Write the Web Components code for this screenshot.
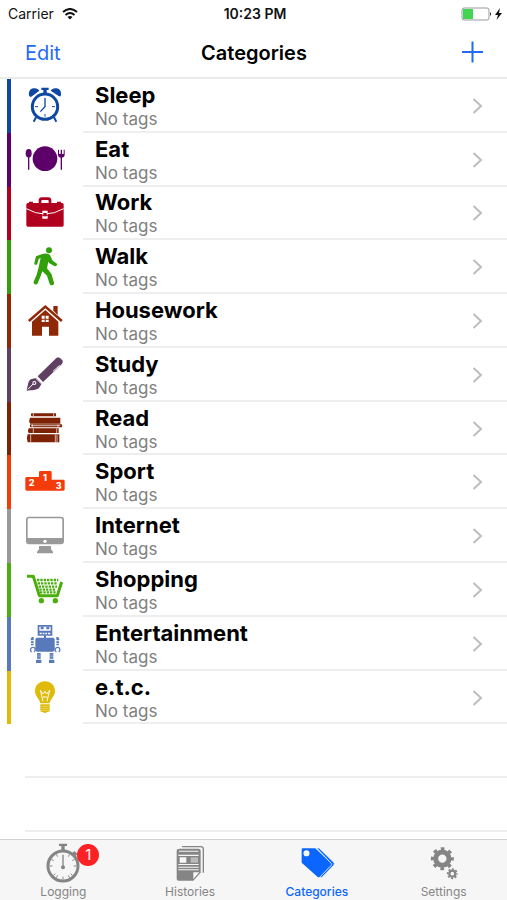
<!DOCTYPE html>
<html lang="en">
<head>
<meta charset="utf-8">
<meta name="viewport" content="width=device-width, initial-scale=1">
<title>Categories</title>
<style>
  body { margin: 0; background: #fff; color: #000; font-family: Inter, "Liberation Sans", sans-serif; }
</style>
</head>
<body>
<category-app></category-app>

<script>
const ICONS = {
  sleep: `<g fill="none" stroke="currentColor">
      <circle cx="60" cy="62" r="38" stroke-width="9"/>
      <path d="M60 36V62L46 77" stroke-width="4"/>
      <path d="M30 62h9M81 62h9M60 84v8" stroke-width="3"/>
      <path d="M33 94l-7 13M87 94l7 13" stroke-width="6"/></g>
    <path d="M13 31C9 18 15 8 26 7c8-1 14 2 17 7L18 33zM107 31c4-13-2-23-13-24-8-1-14 2-17 7l25 17zM49 5h22v7h-6v10H55V12h-6z"/>`,
  eat: `<circle cx="60" cy="56" r="37"/>
    <ellipse cx="11" cy="40" rx="9" ry="13"/><path d="M9 50h4v39H9zM107 50h4v39h-4z"/>
    <path d="M99 29h3v13h5V29h4v13h5V29h3v15c0 6-4 9-10 9s-10-3-10-9z"/>`,
  work: `<path d="M41 30V22c0-6 4-9 9-9h20c5 0 9 3 9 9v8h-8v-6c0-2-1-3-3-3H52c-2 0-3 1-3 3v6z"/>
    <path d="M11 30h98c5 0 7 2 7 6v59c0 4-2 6-6 6H10c-4 0-6-2-6-6V36c0-4 2-6 7-6zM12 26h12v5H12zM96 26h12v5H96z"/>
    <path d="M4 47q56 32 112 0" fill="none" stroke="#fff" stroke-width="3"/>
    <path d="M52 53h16v12H52zM52 68h16v9H52z" fill="#fff"/><path d="M55 60h10v10H55z"/>`,
  walk: `<ellipse cx="72" cy="10" rx="9" ry="9"/>
    <path d="M50 22c9-4 22-4 26 4l7 15 11 8c5 3 1 11-6 8L73 49l-3-5-4 20 13 16 8 27c2 8-10 11-13 4l-8-25-14-13-5 14-9 22c-4 7-14 3-12-5l9-21 6-22 6-29-6 4-4 14c-2 6-11 4-9-2l5-20z"/>`,
  house: `<path d="M85 15h13v27L85 29z"/><path d="M61 12L113 57l-5 6-47-41L14 63l-5-6z"/>
    <path d="M61 27l39 35v42H72V77H51v27H21V62z"/>
    <path d="M50 44h9v9h-9zM62 44h9v9h-9zM50 56h9v7h-9zM62 56h9v7h-9z" fill="#fff"/>`,
  study: `<path d="M38 64L91 12c5-5 9-5 14-3l7 7c3 5 1 9-4 14L54 81z"/>
    <path d="M33 69l17 17-8 13c-8 7-22 6-37 8 4-15 3-27 12-34z"/>
    <path d="M32 70l19 19" stroke="#fff" stroke-width="2"/>
    <path d="M9 103l18-19" stroke="#fff" stroke-width="3"/><circle cx="28" cy="84" r="6" fill="#fff"/><circle cx="28" cy="84" r="3"/>
    <path d="M104 31L84 49" stroke="#fff" stroke-width="3"/>`,
  read: `<path d="M19 13h74v9H19q-3-4 0-9zM15 26h91v18H15q-5-9 0-18zM16 46h94q4 4 0 9H16q-3-4 0-9zM11 58h90v14H11q-4-7 0-14zM8 76h95v24H8q-5-12 0-24z"/>
    <path d="M25 13v9M86 13v9M25 58v14M95 58v14M17 76v24M91 76v24M96 76v24" stroke="#fff" stroke-width="2"/>
    <path d="M22 46v9M99 46v9M18 50h88" stroke="#fff" stroke-width="2"/>`,
  sport: `<path d="M1 49q0-4 4-4h37V31q0-4 4-4h30q4 0 4 4v22h35q4 0 4 4v25q0 4-4 4H5q-4 0-4-4z"/>
    <g fill="#fff" font-family="Inter, sans-serif" font-weight="800" font-size="27" text-anchor="middle"><text x="20" y="73">2</text><text x="60" y="57">1</text><text x="101" y="80">3</text></g>`,
  internet: `<path fill-rule="evenodd" d="M12 2h96q9 0 9 9v65q0 9-9 9H12q-9 0-9-9V11q0-9 9-9zM12 7q-4 0-4 4v55h104V11q0-4-4-4z"/>
    <path d="M42 90h36v10l6 7v5H36v-5l6-7z"/><circle cx="60" cy="76" r="5" fill="#fff"/>`,
  shopping: `<g fill="none" stroke="currentColor" stroke-linejoin="round"><path d="M6 19h19l18 58h54l13-41" stroke-width="9"/>
    <path d="M36 30h64M38 40h60M41 50h55M43 59h50M45 67h48" stroke-width="7" stroke-dasharray="7 3"/></g>
    <circle cx="49" cy="92" r="8"/><circle cx="91" cy="92" r="8"/>`,
  entertainment: `<path d="M38 3h44v32H38zM57 35h6v6h-6zM35 41h50l4 4v33l-4 5H35l-4-5V45z"/>
    <path d="M43 8h34v12H43zM44 26h32v5H44z" fill="#fff"/>
    <path d="M47 9h9v7h-9zM64 9h9v7h-9zM50 25h3v7h-3zM58 25h3v7h-3zM66 25h3v7h-3zM26 39h-5q-5 4-4 10h9zM94 39h5q5 4 4 10h-9zM18 52h8v5h-8zM94 52h8v5h-8zM18 59h8v5h-8zM94 59h8v5h-8zM36 87h11v17H36zM74 87h11v17H74zM33 110q0-3 4-3h12v10H33zM72 107h12q4 0 4 3v7H72z"/>
    <path d="M20 84c-7-5-3-14 4-14s9 10 3 14M94 84c-7-5-3-14 4-14s9 10 3 14" fill="none" stroke="currentColor" stroke-width="4"/>
    <path d="M36 93h11M36 98h11M74 93h11M74 98h11" stroke="#fff" stroke-width="1"/>`,
  etc: `<path d="M60 10c18 0 30 13 30 30 0 14-14 24-16 36H46C44 64 30 54 30 40c0-17 12-30 30-30zM46 79h28v18q0 5-5 5h-3q-6 7-12 0h-3q-5 0-5-5z"/>
    <path d="M46 36l8 34M74 36l-8 34M48 40l7 8 5-8 5 8 7-8M54 57h12" fill="none" stroke="#fff" stroke-width="3"/>
    <path d="M48 85h24M48 91h24M48 97h24" stroke="#fff" stroke-width="1"/>`,
  logging: `<g fill="none" stroke="currentColor"><circle cx="60" cy="69" r="45" stroke-width="9"/>
      <path d="M60 35v38" stroke-width="4"/>
      <path d="M60 101v8M28 69h-8M92 69h8M37 92l-6 6M83 92l6 6M44 41l-4-7M76 41l4-7M44 97l-4 7M76 97l4 7M32 53l-7-4M88 53l7-4" stroke-width="3"/>
      <path d="M91 27l10 9" stroke-width="9"/></g>
    <circle cx="60" cy="73" r="6"/><path d="M48 2h24v7h-7v14H55V9h-7z"/>`,
  histories: `<path d="M36 11h56q8 0 8 8v70" fill="none" stroke="currentColor" stroke-width="4"/>
    <path d="M29 17h56q7 0 7 7v65L70 113H26q-6 0-6-6V24q0-7 9-7z"/>
    <path d="M27 23h58v3H27zM25 35h61v4H25zM29 43h20v16H29zM25 63h61v3H25zM25 71h61v3H25zM25 79h61v3H25zM70 88h18l-18 20z" fill="#f6f6f6"/>
    <path d="M62 43h22v16H62z" fill="#bbb"/>`,
  categories: `<path fill-rule="evenodd" d="M17 16h38l50 48-37 38q-3 2-6 0L14 59V20q0-4 3-4zM28 22a9 9 0 1 0 1 18 9 9 0 0 0-1-18z"/>
    <path d="M59 15h7l44 43q4 5 0 9L75 103h-7l35-36q2-3 0-6z" stroke="#f6f6f6" stroke-width="2"/>`,
  settings: `<g fill="none" stroke="currentColor"><circle cx="55" cy="47" r="20" stroke-width="15"/>
      <circle cx="55" cy="47" r="30" stroke-width="9" stroke-dasharray="11 12.56" stroke-dashoffset="5.5"/>
      <circle cx="85" cy="92" r="9" stroke-width="7"/><circle cx="85" cy="92" r="14" stroke-width="5" stroke-dasharray="6 5" stroke-dashoffset="3"/></g>`
};

class AppIcon extends HTMLElement {
  static observedAttributes = ['name'];
  constructor() {
    super();
    this.attachShadow({ mode: 'open' }).innerHTML = `
      <style>:host { display: block; width: 40px; height: 40px; } svg { display: block; width: 100%; height: 100%; fill: currentColor; overflow: visible; }</style>
      <svg viewBox="0 0 120 120" aria-hidden="true"></svg>`;
  }
  attributeChangedCallback(attribute, before, name) {
    this.shadowRoot.querySelector('svg').innerHTML = ICONS[name] || '';
  }
}
customElements.define('app-icon', AppIcon);

const define = (name, markup, setup) => {
  const template = document.createElement('template');
  template.innerHTML = markup;
  customElements.define(name, class extends HTMLElement {
    constructor() {
      super();
      this.attachShadow({ mode: 'open' }).append(template.content.cloneNode(true));
    }
    connectedCallback() { if (setup) setup(this, this.shadowRoot); }
  });
};

define('status-bar', `
  <style>
    :host { display: grid; grid-template-columns: 1fr auto 1fr; align-items: center; height: 28px; padding: 0 5px 0 8px; font-size: 14px; line-height: 20px; color: #111; }
    div { display: flex; align-items: center; gap: 8px; }
    .power { justify-content: flex-end; gap: 3px; }
    time { font-weight: 600; }
    svg { display: block; }
  </style>
  <div><span>Carrier</span>
    <svg width="16" height="12" viewBox="0 0 16 12" role="img" aria-label="Wi-Fi"><path d="M1 4q7-6 14 0M3.500 7q4.500-4 9 0" fill="none" stroke="#111" stroke-width="2"/><path d="M5.500 9q2.500-2 5 0L8 11.500z" fill="#111"/></svg>
  </div>
  <time>10:23 PM</time>
  <div class="power">
    <svg width="31" height="14" viewBox="0 0 31 14" role="img" aria-label="Battery"><rect x="1" y="1" width="27" height="12" rx="2" fill="#fff" stroke="#999"/><path d="M2 2h10v10H2z" fill="#43d551"/><path d="M29 5q2 2 0 4z" fill="#222"/></svg>
    <svg width="7" height="12" viewBox="0 0 7 12" role="img" aria-label="Charging"><path d="M5 0L0 7h3L1.500 12 7 5H4z" fill="#111"/></svg>
  </div>`);

define('nav-header', `
  <style>
    :host { display: grid; grid-template-columns: 1fr auto 1fr; align-items: center; padding: 0 24px 0 25px; border-bottom: 2px solid #ebebeb; box-sizing: border-box; height: 51px; }
    h1 { margin: 0; font-size: 20px; line-height: 24px; font-weight: 600; }
    button { border: 0; padding: 0; background: none; color: #1f6bf5; font: inherit; font-size: 20px; line-height: 24px; justify-self: start; cursor: pointer; }
    button:last-child { justify-self: end; }
    svg { display: block; }
  </style>
  <button type="button">Edit</button>
  <h1><slot></slot></h1>
  <button type="button" aria-label="Add category"><svg width="21" height="26" viewBox="0 0 21 26"><path d="M0 12h21M10.500 1.500v21" stroke="currentColor" stroke-width="2"/></svg></button>`);

define('category-row', `
  <style>
    :host { display: grid; padding-left: 7px; min-height: 0; }
    a { display: grid; grid-template-columns: 4px 58px 1fr; gap: 0 7px; color: inherit; text-decoration: none; }
    .bar { background: var(--tint); }
    app-icon { color: var(--tint); align-self: center; margin-left: 7px; }
    .body { display: flex; align-items: center; justify-content: space-between; padding: 2px 24px 0 12px; border-bottom: 2px solid #eee; }
    h2 { margin: 0; font-size: 22px; line-height: 26px; font-weight: 700; }
    p { margin: 0; font-size: 17px; line-height: 22px; color: #808080; }
  </style>
  <a href="#"><span class="bar"></span><app-icon></app-icon>
    <div class="body"><div><h2><slot></slot></h2><p>No tags</p></div>
      <svg width="11" height="18" viewBox="0 0 11 18" aria-hidden="true"><path d="M1.500 2l7.500 7-7.500 7" fill="none" stroke="#bdbdbd" stroke-width="2"/></svg>
    </div></a>`,
  (el, root) => {
    root.querySelector('app-icon').setAttribute('name', el.getAttribute('icon'));
    el.style.setProperty('--tint', el.getAttribute('tint'));
  });

define('category-list', `
  <style>
    :host { display: grid; grid-auto-rows: minmax(53px, 1fr); padding-bottom: 7px; }
    .empty { margin-left: 25px; border-bottom: 2px solid #eee; }
  </style>
  <slot></slot><div class="empty"></div><div class="empty"></div>`);

define('tab-item', `
  <style>
    :host { display: flex; justify-content: center; }
    a { position: relative; display: flex; flex-direction: column; align-items: center; justify-content: space-between; padding: 3px 0 0; color: #858585; font-size: 12px; line-height: 16px; text-decoration: none; }
    :host([active]) a { color: #0b66ff; }
    :host([active]) span { font-weight: 500; }
    b { position: absolute; top: 4px; left: 50%; margin-left: 14px; width: 22px; border-radius: 11px; background: #fc2125; color: #fff; font-size: 15px; line-height: 22px; font-weight: 400; text-align: center; }
    b[hidden] { display: none; }
  </style>
  <a href="#"><app-icon></app-icon><span><slot></slot></span><b hidden></b></a>`,
  (el, root) => {
    root.querySelector('app-icon').setAttribute('name', el.getAttribute('icon'));
    if (el.hasAttribute('active')) root.querySelector('a').setAttribute('aria-current', 'page');
    if (el.hasAttribute('badge')) {
      const badge = root.querySelector('b');
      badge.hidden = false;
      badge.textContent = el.getAttribute('badge');
    }
  });

define('tab-bar', `
  <style>:host { display: grid; grid-template-columns: repeat(4, 1fr); height: 60px; border-top: 1px solid #d2d2d2; background: #f6f6f6; }</style>
  <slot></slot>`);

define('category-app', `
  <style>
    :host { display: flex; flex-direction: column; min-height: 100vh; }
    category-list { flex: 1; }
  </style>
  <status-bar></status-bar>
  <nav-header>Categories</nav-header>
  <category-list>
    <category-row icon="sleep" tint="#0f48a3">Sleep</category-row>
    <category-row icon="eat" tint="#5e0069">Eat</category-row>
    <category-row icon="work" tint="#b1001f">Work</category-row>
    <category-row icon="walk" tint="#32a008">Walk</category-row>
    <category-row icon="house" tint="#8f2806">Housework</category-row>
    <category-row icon="study" tint="#603f62">Study</category-row>
    <category-row icon="read" tint="#7d2205">Read</category-row>
    <category-row icon="sport" tint="#f43b0a">Sport</category-row>
    <category-row icon="internet" tint="#999999">Internet</category-row>
    <category-row icon="shopping" tint="#4bae0c">Shopping</category-row>
    <category-row icon="entertainment" tint="#5879ba">Entertainment</category-row>
    <category-row icon="etc" tint="#dfba08">e.t.c.</category-row>
  </category-list>
  <tab-bar role="navigation">
    <tab-item icon="logging" badge="1">Logging</tab-item>
    <tab-item icon="histories">Histories</tab-item>
    <tab-item icon="categories" active>Categories</tab-item>
    <tab-item icon="settings">Settings</tab-item>
  </tab-bar>`);
</script>
</body>
</html>
